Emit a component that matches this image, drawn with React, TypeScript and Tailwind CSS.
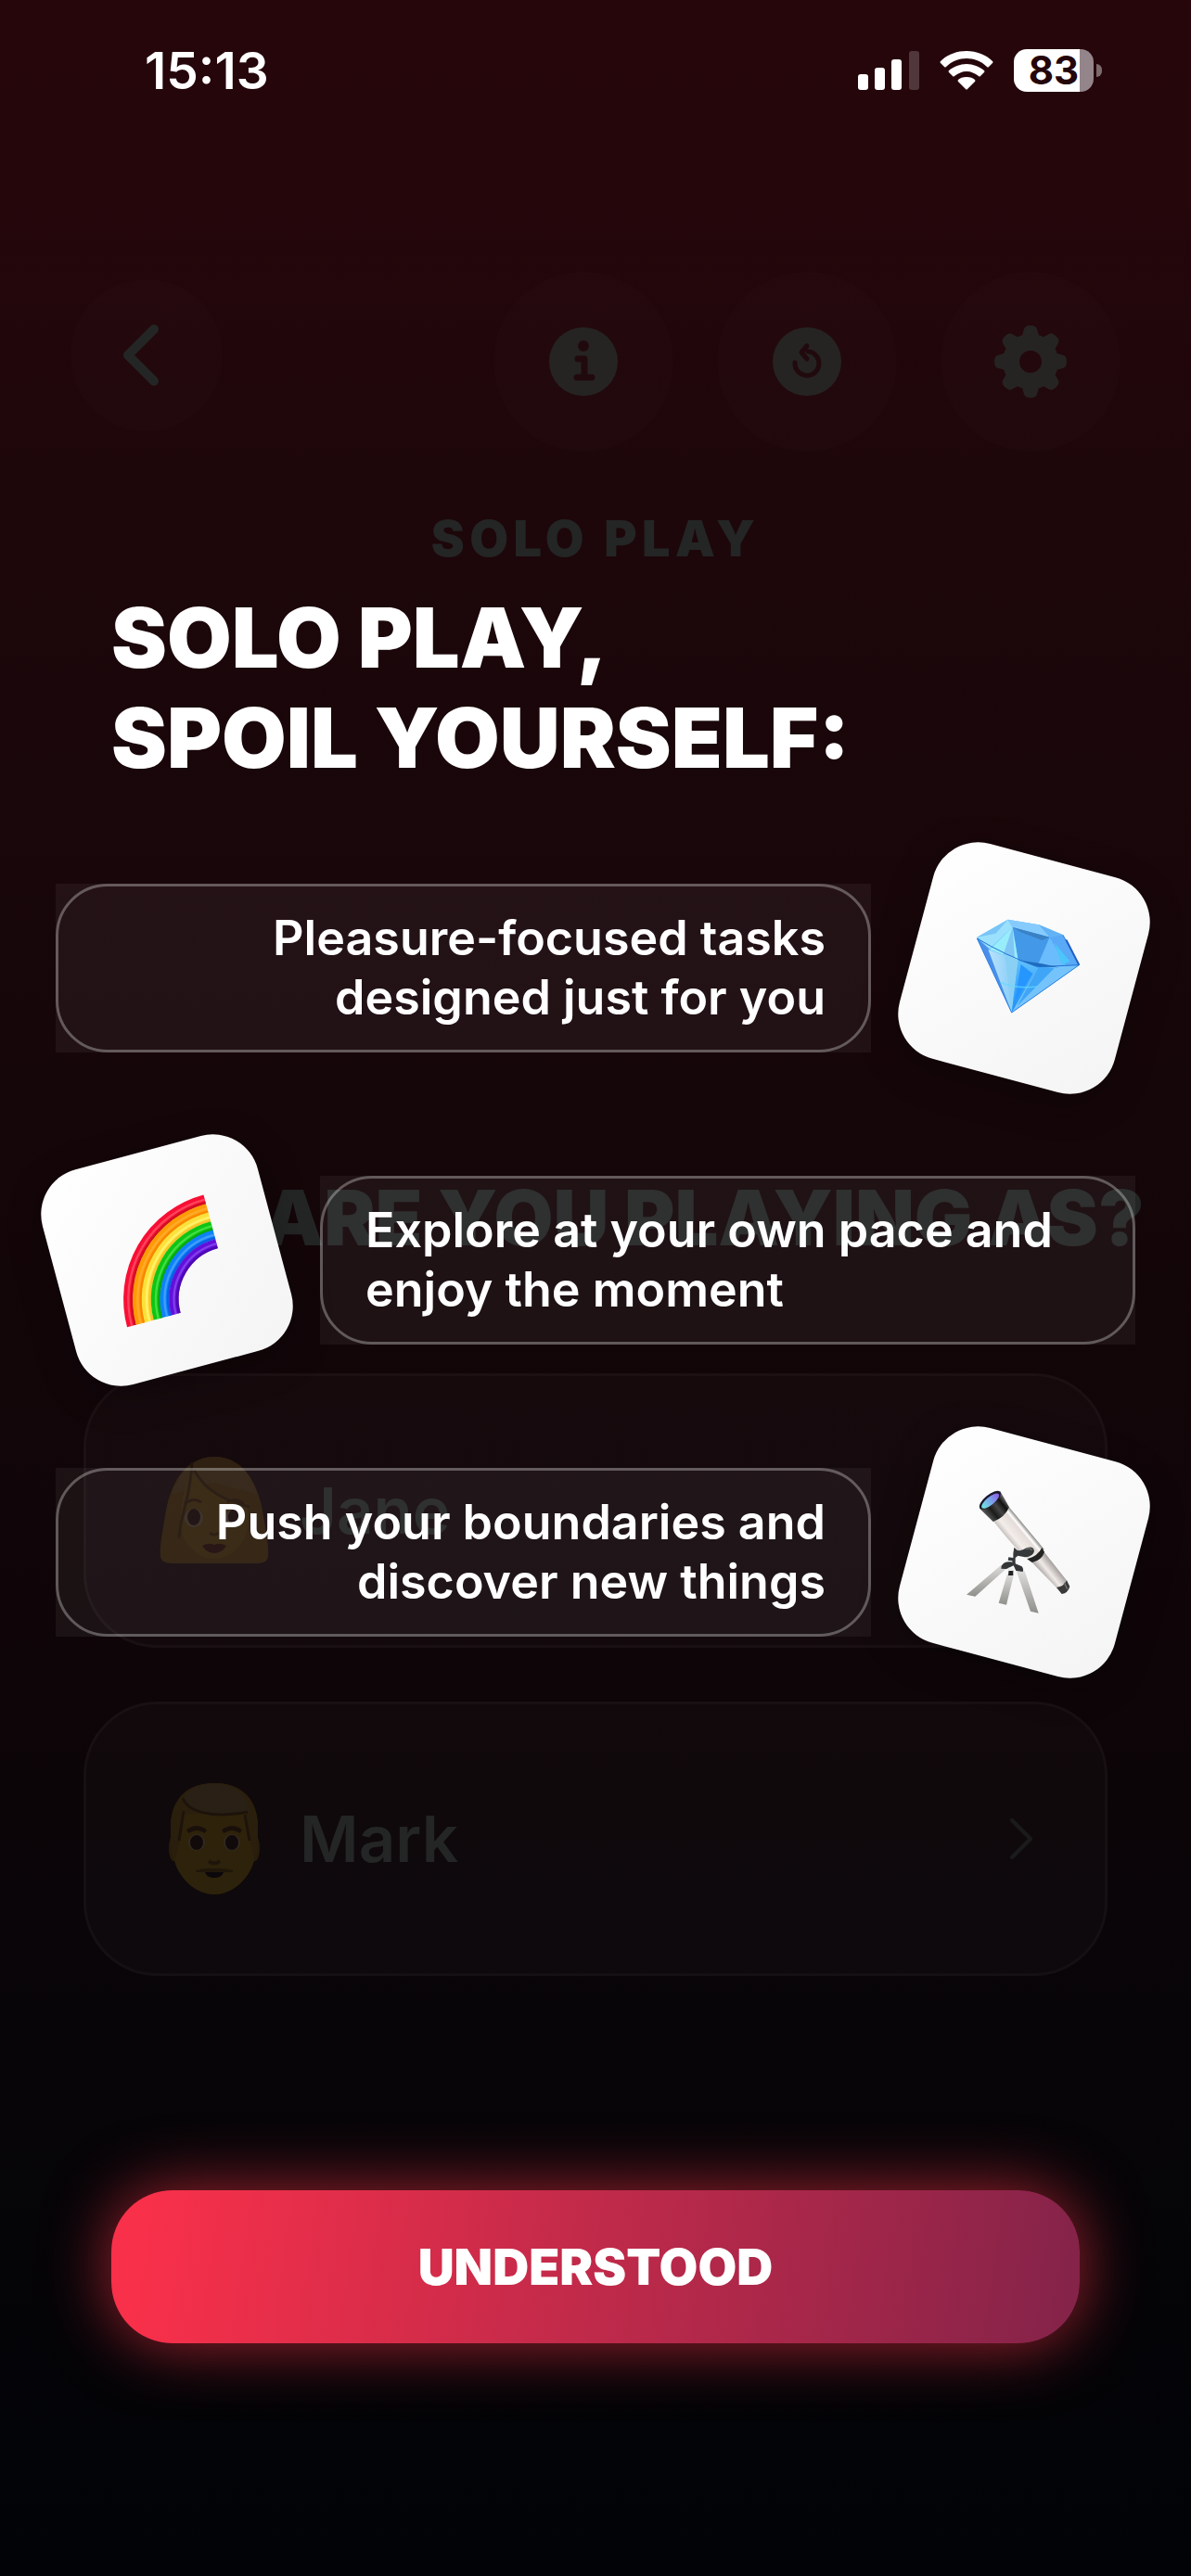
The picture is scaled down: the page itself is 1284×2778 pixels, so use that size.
import type { ReactNode } from "react";

const people = [
    { name: "Jane", icon: <WomanFace /> },
    { name: "Mark", icon: <ManFace /> },
];

const tips = [
    { text: ["Pleasure-focused tasks", "designed just for you"], icon: <Diamond />, side: "right" },
    { text: ["Explore at your own pace and", "enjoy the moment"], icon: <Rainbow />, side: "left" },
    { text: ["Push your boundaries and", "discover new things"], icon: <Telescope />, side: "right" },
];

/* Emoji style drawings */

function Diamond() {
    return (
        <svg viewBox="102 102 720 720" className="w-full h-full" aria-hidden="true">
            <defs>
                <linearGradient id="gemPavilion" x1="0" y1="0" x2="0" y2="1">
                    <stop offset="0" stopColor="#5fc0fb" />
                    <stop offset="1" stopColor="#1f8ffa" />
                </linearGradient>
                <linearGradient id="gemLeft" x1="0" y1="0" x2="1" y2="0">
                    <stop offset="0" stopColor="#b9e3fb" />
                    <stop offset="1" stopColor="#7fc9f8" />
                </linearGradient>
            </defs>
            <g transform="rotate(-15 462 462)" strokeLinejoin="round">
                <path d="M310 362 410 305 510 322 588 355 640 452 422 606Z" fill="#55b4fb" />
                <path d="M310 362 410 305 425 330 350 400Z" fill="#9be0fd" />
                <path d="M310 362 410 305 370 350Z" fill="#79c5f7" />
                <path d="M410 305 510 322 588 355 545 362 425 330Z" fill="#86cbfd" />
                <path d="M510 322 588 355 545 362Z" fill="#62b2f5" />
                <path d="M425 330 545 362 510 455 443 437Z" fill="#4399e8" />
                <path d="M425 330 545 362 520 372 450 345Z" fill="#3a80c4" />
                <path d="M425 330 350 402 443 437Z" fill="#98edfb" />
                <path d="M425 330 432 430 395 418Z" fill="#7fc6f5" />
                <path d="M545 362 505 455 600 458Z" fill="#6bbcfc" />
                <path d="M545 362 588 355 640 452 600 458Z" fill="#59a9f6" />
                <path d="M560 380 610 440 585 452Z" fill="#4bc6fb" />
                <path d="M310 366 350 402 422 606Z" fill="#4a8fea" />
                <path d="M346 402 443 437 422 606Z" fill="url(#gemLeft)" />
                <path d="M400 420 443 437 422 606Z" fill="#8ad0f4" />
                <path d="M443 437 510 457 422 606Z" fill="url(#gemPavilion)" />
                <path d="M452 450 490 480 430 580Z" fill="#2696ff" />
                <path d="M510 457 640 452 422 606Z" fill="#74c4fb" />
                <path d="M510 457 560 462 440 585Z" fill="#3fa5f7" />
                <path d="M385 508Q430 530 505 522" fill="none" stroke="#62dcff" strokeWidth="5" opacity=".7" />
                <path d="M310 366Q400 420 505 458L640 452" fill="none" stroke="#236fd0" strokeWidth="3" />
                <path d="M450 437 502 456 575 460 520 448Z" fill="#1f6bbd" />
                <path d="M588 355 640 452 422 606 310 366" fill="none" stroke="#2c7fe4" strokeWidth="3" />
                <path d="M598 370 640 452" stroke="#1f5fc8" strokeWidth="6" />
            </g>
        </svg>
    );
}

const rainbowBands = [
    { r: 334, base: "#f80f35", dark: "#c0101c", light: "#ff5065" },
    { r: 304, base: "#ff9b05", dark: "#f57c00", light: "#ffae35" },
    { r: 275, base: "#fde03a", dark: "#f5b82a", light: "#fff675" },
    { r: 245, base: "#0fc514", dark: "#079a0a", light: "#4fe350" },
    { r: 216, base: "#0d82fa", dark: "#0b50dc", light: "#4da5fb" },
    { r: 186, base: "#6310dc", dark: "#4507a0", light: "#8a48ee" },
];

function Rainbow() {
    return (
        <svg viewBox="90 86 720 720" className="w-full h-full" aria-hidden="true" fill="none">
            {rainbowBands.map((band) => (
                <g key={band.r}>
                    <path d={`M${619 - band.r} 622a${band.r} ${band.r} 0 0 1 ${band.r} ${-band.r}`} stroke={band.base} strokeWidth="31" />
                    <path d={`M${630 - band.r} 622a${band.r - 11} ${band.r - 11} 0 0 1 ${band.r - 11} ${11 - band.r}`} stroke={band.dark} strokeWidth="8" opacity=".7" />
                    <path d={`M${619 - band.r} 622a${band.r} ${band.r} 0 0 1 ${band.r} ${-band.r}`} stroke={band.light} strokeWidth="7" opacity=".8" />
                </g>
            ))}
        </svg>
    );
}

function Telescope() {
    return (
        <svg viewBox="102 102 720 720" className="w-full h-full" aria-hidden="true">
            <defs>
                <linearGradient id="tube" gradientUnits="userSpaceOnUse" x1="400" y1="405" x2="452" y2="362">
                    <stop offset="0" stopColor="#c9c4c0" />
                    <stop offset=".25" stopColor="#f3eeeb" />
                    <stop offset=".7" stopColor="#e4dcd8" />
                    <stop offset=".82" stopColor="#ffffff" />
                    <stop offset="1" stopColor="#8b8784" />
                </linearGradient>
                <linearGradient id="tubeEnd" gradientUnits="userSpaceOnUse" x1="528" y1="538" x2="565" y2="508">
                    <stop offset="0" stopColor="#b5b0ad" />
                    <stop offset=".4" stopColor="#f0ebe8" />
                    <stop offset="1" stopColor="#a39e9b" />
                </linearGradient>
                <linearGradient id="barrel" gradientUnits="userSpaceOnUse" x1="340" y1="342" x2="402" y2="292">
                    <stop offset="0" stopColor="#555" />
                    <stop offset=".3" stopColor="#1b1b1b" />
                    <stop offset=".55" stopColor="#444" />
                    <stop offset=".8" stopColor="#111" />
                    <stop offset="1" stopColor="#666" />
                </linearGradient>
                <linearGradient id="lens" x1="0" y1="0" x2="1" y2="0">
                    <stop offset="0" stopColor="#6fe8e0" />
                    <stop offset=".5" stopColor="#7ba6ec" />
                    <stop offset="1" stopColor="#8b5be6" />
                </linearGradient>
                <linearGradient id="leg" x1="0" y1="0" x2="0" y2="1">
                    <stop offset="0" stopColor="#dedcda" />
                    <stop offset="1" stopColor="#8f8f8c" />
                </linearGradient>
            </defs>
            <g transform="rotate(-15 462 462)">
                <path d="M276 599 304 605 404 515 388 503Z" fill="url(#leg)" />
                <path d="M380 626 405 632 428 538 408 532Z" fill="url(#leg)" />
                <path d="M438 525 483 653 509 659 464 523Z" fill="url(#leg)" />
                <path d="M389 506Q398 490 420 493L455 508Q462 517 458 525L436 522 428 505 405 516 388 515Z" fill="#333536" />
                <path d="M413 515h14v22h-16Z" fill="#222" />
                <path d="M412 512h18l-2 10h-17Z" fill="#eee" />
                <path d="M362 360 413 315 527 452 482 490Q440 460 362 360Z" fill="url(#tube)" />
                <path d="M485 492 526 460 602 556 570 580Z" fill="url(#tubeEnd)" />
                <path d="M472 484Q506 475 520 447L528 461Q520 487 488 495Z" fill="#232323" />
                <path d="M567 576Q590 573 600 553L610 573Q604 594 584 597Z" fill="#3a3a3a" />
                <path d="M592 560 602 581" stroke="#777" strokeWidth="4" />
                <path d="M318 320 385 265 414 316Q400 350 362 363Z" fill="url(#barrel)" />
                <ellipse cx="352" cy="293" rx="42" ry="17" transform="rotate(-39 352 293)" fill="#17172a" />
                <ellipse cx="353" cy="296" rx="35" ry="13" transform="rotate(-39 353 296)" fill="url(#lens)" />
                <path d="M430 446 440 455Q452 460 470 448 492 440 495 458 492 476 465 478L442 473 434 480 434 503 423 503 424 490 410 488 412 478 427 480 427 466Z" fill="#36393a" />
                <path d="M468 452q16-6 20 4" stroke="#666" strokeWidth="5" fill="none" />
            </g>
        </svg>
    );
}

function WomanFace() {
    return (
        <svg viewBox="0 0 120 120" className="w-[120px] h-[120px] opacity-15" aria-hidden="true">
            <path d="M60 2C28 2 12 32 7 66 3 90 1 100 2 110q1 7 12 7h92q11 0 12-7c1-10-1-20-5-44C108 32 92 2 60 2Z" fill="#b58a08" />
            <path d="M60 2C38 2 22 18 15 42L60 30 106 42C98 16 82 2 60 2Z" fill="#c2a034" />
            <path d="M34 16C24 50 22 70 25 84c6 18 22 28 35 28s29-10 35-28c3-14 2-22 0-32C70 48 46 36 36 18Z" fill="#d6aa0c" />
            <path d="M36 8C34 50 24 60 22 90M38 16C52 42 76 50 98 56" fill="none" stroke="#6d4f00" strokeWidth="3" />
            <ellipse cx="38" cy="68" rx="10" ry="10" fill="#fff" opacity=".6" />
            <ellipse cx="82" cy="68" rx="10" ry="10" fill="#fff" opacity=".6" />
            <ellipse cx="38" cy="67" rx="7" ry="9" fill="#241000" />
            <ellipse cx="82" cy="67" rx="7" ry="9" fill="#241000" />
            <path d="M28 53q9-8 18-2M92 53q-9-8-18-2" fill="none" stroke="#6d4500" strokeWidth="3" />
            <path d="M55 84q5 4 10 0" fill="none" stroke="#7d5a00" strokeWidth="3" />
            <path d="M47 98q7-4 13-1 6-3 13 1-5 8-13 8t-13-8Z" fill="#571a05" />
        </svg>
    );
}

function ManFace() {
    return (
        <svg viewBox="0 0 120 120" className="w-[120px] h-[120px] opacity-15" aria-hidden="true">
            <ellipse cx="16" cy="70" rx="5" ry="14" fill="#b58a08" />
            <ellipse cx="104" cy="70" rx="5" ry="14" fill="#b58a08" />
            <path d="M60 0C34 0 14 14 13 46c0 16 1 28 4 38C24 106 42 120 60 120s36-14 43-36c3-10 4-22 4-38C106 14 86 0 60 0Z" fill="#e0ae08" />
            <path d="M60 0C34 0 14 14 13 46c0 16 1 28 4 38l6-20 4-30c12-2 60 2 68-2l4 32 5 20c3-10 3-22 3-38C106 14 86 0 60 0Z" fill="#c4980c" />
            <path d="M26 18C34 4 46 1 60 1c22 0 36 12 38 30-22 6-62 4-72-13Z" fill="#bda44a" />
            <path d="M26 16C32 32 60 38 96 31M27 30 22 62M93 34l5 28" fill="none" stroke="#6d4f00" strokeWidth="3" />
            <path d="M33 51q8-5 16 0M71 51q8-5 16 0" fill="none" stroke="#5c3b00" strokeWidth="5" strokeLinecap="round" />
            <ellipse cx="41" cy="64" rx="9" ry="9" fill="#fff" opacity=".55" />
            <ellipse cx="79" cy="64" rx="9" ry="9" fill="#fff" opacity=".55" />
            <ellipse cx="41" cy="64" rx="7" ry="8" fill="#1d0d00" />
            <ellipse cx="79" cy="64" rx="7" ry="8" fill="#1d0d00" />
            <path d="M54 84q6 5 12 0" fill="none" stroke="#7d5a00" strokeWidth="4" />
            <path d="M40 94q10-3 20-2 10-1 20 2v2H40Z" fill="#8a6500" />
            <path d="M50 96h20q-2 6-10 6t-10-6Z" fill="#000" />
        </svg>
    );
}

/* Toolbar icons */

function InfoIcon() {
    return (
        <svg viewBox="0 0 74 74" className="w-[74px] h-[74px]" aria-hidden="true">
            <circle cx="37" cy="37" r="37" fill="#262423" />
            <circle cx="37" cy="20" r="6" fill="#210a0e" />
            <path d="M31 34h7v20M30 54h16" fill="none" stroke="#210a0e" strokeWidth="7" strokeLinecap="round" strokeLinejoin="round" />
        </svg>
    );
}

function RestartIcon() {
    return (
        <svg viewBox="0 0 74 74" className="w-[74px] h-[74px]" aria-hidden="true">
            <circle cx="37" cy="37" r="37" fill="#262423" />
            <path d="M24 38a13 13 0 1 0 14-12" fill="none" stroke="#210a0e" strokeWidth="5" strokeLinecap="round" />
            <path d="M37 20 31 27 37 34" fill="none" stroke="#210a0e" strokeWidth="5" strokeLinecap="round" strokeLinejoin="round" />
        </svg>
    );
}

function GearIcon() {
    return (
        <svg viewBox="0 0 78 78" className="w-[78px] h-[78px]" aria-hidden="true">
            {[0, 45, 90, 135, 180, 225, 270, 315].map((angle) => (
                <path key={angle} d="M28 18 32 4Q33 0 39 0 45 0 46 4L50 18Z" fill="#262423" transform={`rotate(${angle} 39 39)`} />
            ))}
            <circle cx="39" cy="39" r="21" fill="none" stroke="#262423" strokeWidth="18" />
        </svg>
    );
}

function RoundButton({ label, children }: { label: string; children: ReactNode }) {
    return (
        <button type="button" aria-label={label} className="w-[194px] h-[194px] rounded-full bg-white/1 flex items-center justify-center">
            {children}
        </button>
    );
}

function StatusBar() {
    return (
        <div className="flex items-center justify-between pl-[156px] pr-24 pt-[44px]">
            <span className="text-[55px] leading-[64px] font-semibold">15:13</span>

            <div className="flex items-center gap-[22px]">
                <svg viewBox="0 0 66 42" className="w-[66px] h-[42px]" aria-hidden="true">
                    <rect x="0" y="25" width="11" height="17" rx="3" fill="#fff" />
                    <rect x="18" y="18" width="11" height="24" rx="3" fill="#fff" />
                    <rect x="36" y="9" width="11" height="33" rx="3" fill="#fff" />
                    <rect x="55" y="0" width="11" height="42" rx="3" fill="#fff" opacity=".2" />
                </svg>

                <svg viewBox="0 0 58 42" className="w-[58px] h-[42px]" aria-hidden="true" fill="#fff">
                    <path d="M29 0C40 0 50 4 57 11q1 1 0 2l-4 4q-1 1-2 0C45 11 37 8 29 8S13 11 7 17q-1 1-2 0l-4-4q-1-1 0-2C8 4 18 0 29 0Z" />
                    <path d="M29 14c7 0 14 3 19 7q1 1 0 2l-4 4q-1 1-2 0c-4-3-8-5-13-5s-9 2-13 5q-1 1-2 0l-4-4q-1-1 0-2c5-4 12-7 19-7Z" />
                    <path d="M29 28c4 0 7 1 9 3q1 1 0 2l-8 8q-1 1-2 0l-8-8q-1-1 0-2c2-2 5-3 9-3Z" />
                </svg>

                {/* Battery */}
                <div className="flex items-center gap-[3px]">
                    <div className="w-[86px] h-[46px] rounded-[14px] bg-[linear-gradient(90deg,#ffffff_82%,#94858a_82%)] flex items-center justify-center">
                        <span className="text-[42px] leading-[46px] font-bold text-[#24060b]">83</span>
                    </div>
                    <div className="w-[6px] h-[14px] rounded-r-full bg-[#7c6a6d]" />
                </div>
            </div>
        </div>
    );
}

export default function App() {
    return (
        <div className="relative min-h-screen overflow-hidden text-white font-['Inter','Liberation_Sans',sans-serif] bg-[linear-gradient(180deg,#26060b_0%,#24060b_8%,#1e070b_18%,#150609_42%,#0f0508_62%,#070508_80%,#010306_100%)]">

            {/* Player picker */}
            <main className="pt-[293px] text-[#242525]">
                <nav className="flex items-start justify-between px-[76px]">
                    <a href="#back" aria-label="Back" className="my-2 w-[164px] h-[164px] pr-3 rounded-full bg-white/1 flex items-center justify-center">
                        <svg viewBox="0 0 40 66" className="w-[40px] h-[66px]" aria-hidden="true">
                            <path d="M34 5 6 33 34 61" fill="none" stroke="#242625" strokeWidth="10" strokeLinecap="round" strokeLinejoin="round" />
                        </svg>
                    </a>
                    <div className="flex gap-[47px]">
                        <RoundButton label="Info"><InfoIcon /></RoundButton>
                        <RoundButton label="Restart"><RestartIcon /></RoundButton>
                        <RoundButton label="Settings"><GearIcon /></RoundButton>
                    </div>
                </nav>

                <p className="mt-[62px] text-center text-[54px] leading-[64px] font-black tracking-widest">SOLO PLAY</p>

                <h2 className="mt-[658px] text-center whitespace-nowrap text-[83px] leading-[84px] font-black">WHO ARE YOU PLAYING AS?</h2>

                <div className="mt-[126px] px-[90px] flex flex-col gap-[58px]">
                    {people.map((person) => (
                        <button
                            key={person.name}
                            type="button"
                            className="w-full h-[296px] px-[78px] rounded-[80px] border-3 border-white/3 bg-white/2 flex items-center gap-8"
                        >
                            {person.icon}
                            <span className="text-[69px] leading-[80px] font-semibold">{person.name}</span>
                            <svg viewBox="0 0 24 44" className="ml-auto w-[24px] h-[44px]" aria-hidden="true">
                                <path d="M2 2 22 22 2 42" fill="none" stroke="#1c1b1c" strokeWidth="4" strokeLinecap="round" strokeLinejoin="round" />
                            </svg>
                        </button>
                    ))}
                </div>
            </main>

            {/* Intro dialog */}
            <section role="dialog" aria-labelledby="intro-title" className="absolute inset-0 flex flex-col">
                <StatusBar />

                <h1 id="intro-title" className="mt-[526px] px-[120px] text-[90px] leading-[108px] font-black">
                    SOLO PLAY,
                    <br />
                    SPOIL YOURSELF:
                </h1>

                <ul className="mt-[74px] px-[60px] flex flex-col gap-[75px]">
                    {tips.map((tip) => (
                        <li
                            key={tip.text[0]}
                            className={`flex items-center gap-[45px] ${tip.side === "right" ? "text-right" : "flex-row-reverse text-left"}`}
                        >
                            <div className="flex-1 bg-white/5">
                                <p className="px-[46px] py-6 border-3 border-white/30 rounded-[56px] text-[52px] leading-[64px] font-semibold">
                                    {tip.text[0]}
                                    <br />
                                    {tip.text[1]}
                                </p>
                            </div>
                            <div
                                className={`w-[240px] h-[240px] shrink-0 rounded-[50px] bg-linear-to-br from-white to-[#f4f4f4] shadow-[0_12px_40px_rgba(0,0,0,0.25)] ${tip.side === "right" ? "rotate-15" : "-rotate-15"}`}
                            >
                                {tip.icon}
                            </div>
                        </li>
                    ))}
                </ul>

                <div className="mt-auto px-[120px] pb-[251px]">
                    <button
                        type="button"
                        className="w-full h-[165px] rounded-[66px] bg-[linear-gradient(98deg,#f8304a_4%,#862349_98%)] shadow-[0_0_70px_rgba(235,48,66,0.7)] text-[54px] font-black"
                    >
                        UNDERSTOOD
                    </button>
                </div>
            </section>
        </div>
    );
}
